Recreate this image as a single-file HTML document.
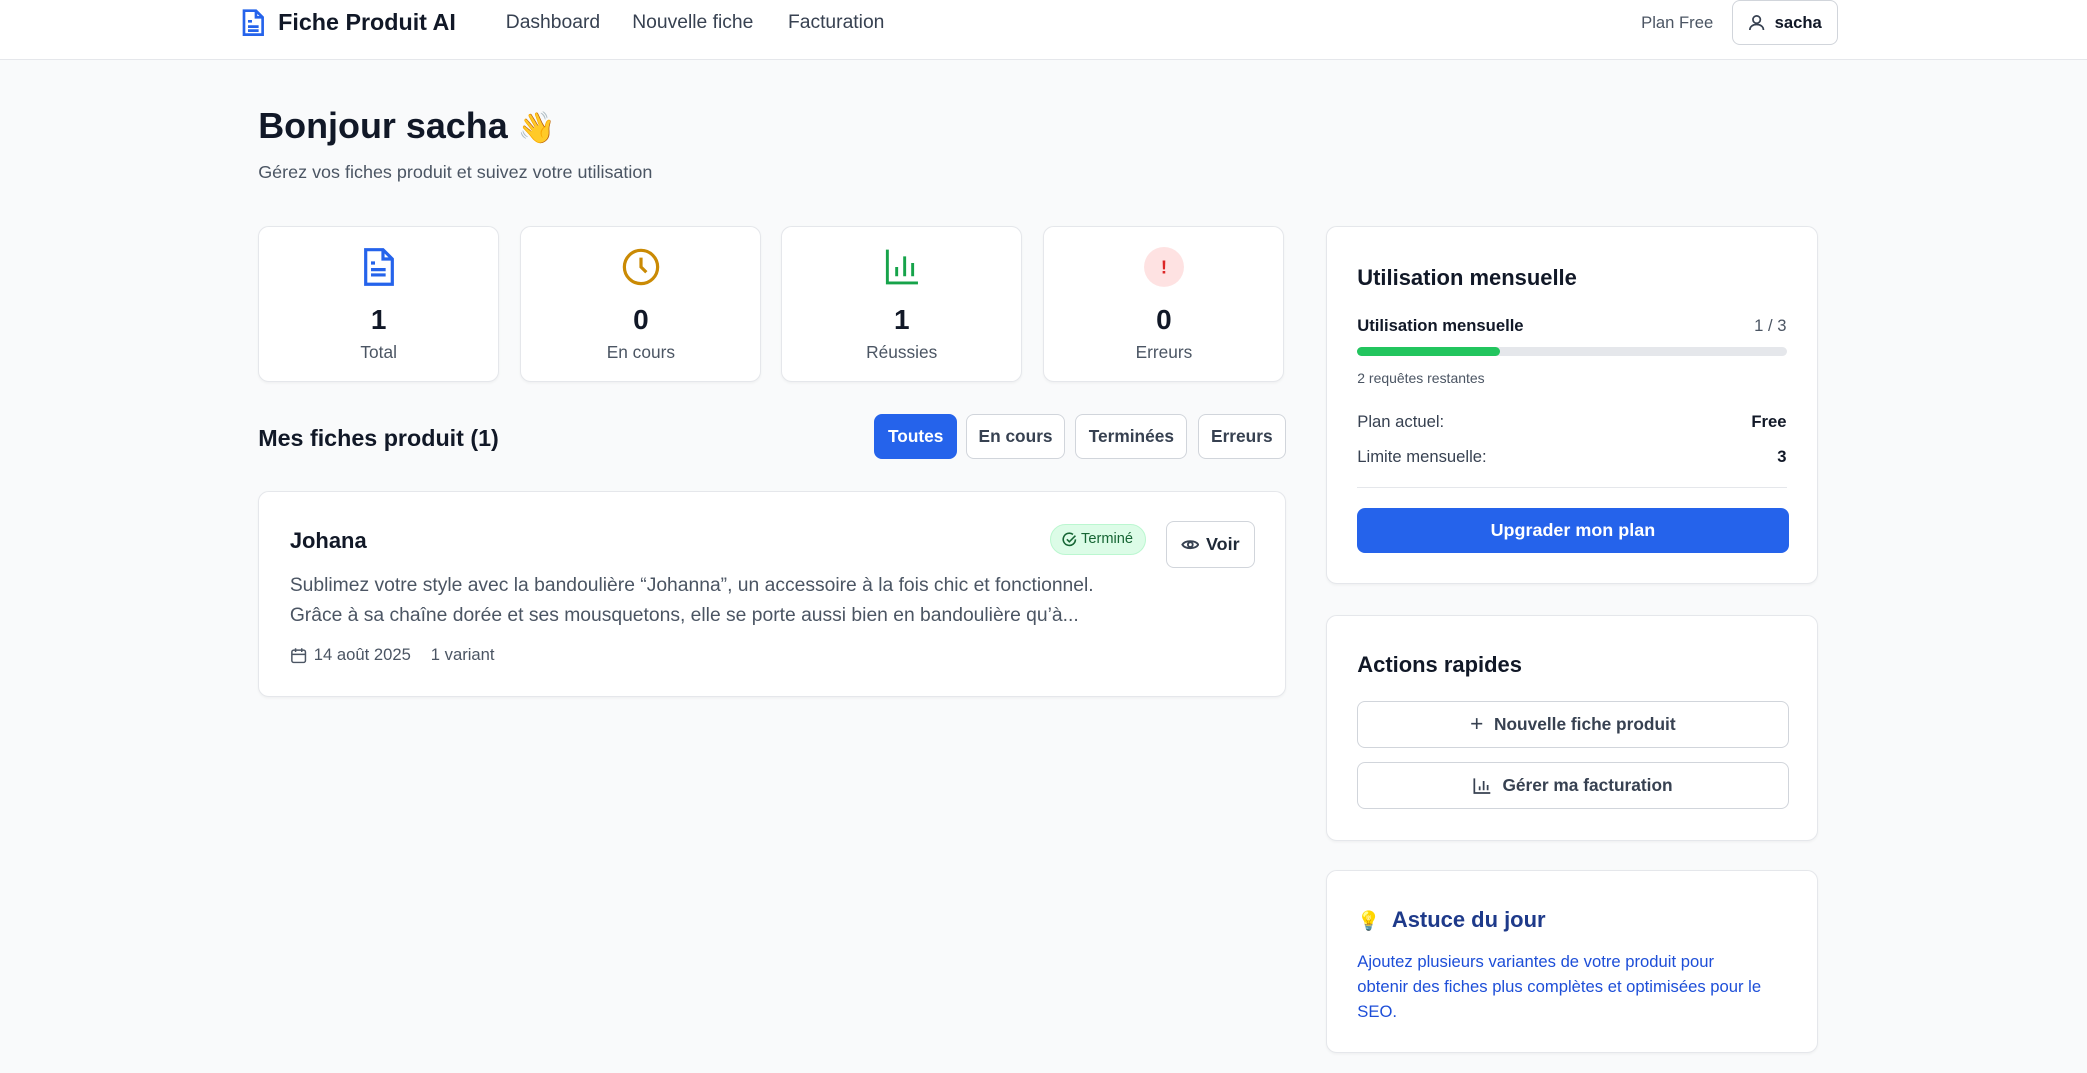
<!DOCTYPE html>
<html><head><meta charset="utf-8"><style>
html{zoom:1.33099}
*{box-sizing:border-box;margin:0;padding:0}
body{width:1568px;height:806px;overflow:hidden;background:#f9fafb;font-family:"Liberation Sans","Noto Sans CJK JP",sans-serif;color:#111827;position:relative}
.a{position:absolute}
.nav{left:0;top:0;width:1568px;height:45px;background:#fff;border-bottom:1px solid #e5e7eb}
.card{position:absolute;background:#fff;border:1px solid #e5e7eb;border-radius:8px;box-shadow:0 1px 2px rgba(0,0,0,.04)}
.stat{top:170px;height:117px;width:181px;text-align:center}
.stat svg{position:absolute;left:50%;top:15px;transform:translateX(-50%)}
.stat .n{position:absolute;top:58px;width:100%;font-size:21px;font-weight:bold}
.stat .l{position:absolute;top:86px;width:100%;font-size:13px;color:#4b5563}
.fb{position:absolute;top:311px;height:34px;border:1px solid #d1d5db;border-radius:6px;background:#fff;font-size:13px;font-weight:600;color:#374151;display:flex;align-items:center;justify-content:center}
.t{font-size:16.5px;font-weight:bold}
.ob{position:absolute;left:23px;width:324px;height:35px;border:1px solid #d1d5db;border-radius:6px;font-size:13px;font-weight:bold;color:#374151;display:flex;align-items:center;justify-content:center;gap:8px}
</style></head><body>
<div class="a nav"></div>
<svg class="a" style="left:180px;top:6px" width="20" height="22" viewBox="0 0 20 22" fill="none" stroke="#2563eb" stroke-width="2"><path d="M3 2h9l5 5v13H3z"/><path d="M12 2v5h5M6 10h3M6 14h8M6 17h8"/></svg>
<div class="a" style="left:209px;top:7px;font-size:17.5px;font-weight:bold">Fiche Produit AI</div>
<div class="a" style="left:380px;top:9px;font-size:14.5px;color:#374151">Dashboard</div>
<div class="a" style="left:475px;top:9px;font-size:14.5px;color:#374151">Nouvelle fiche</div>
<div class="a" style="left:592px;top:9px;font-size:14.5px;color:#374151">Facturation</div>
<div class="a" style="left:1233px;top:10px;font-size:12.5px;color:#4b5563">Plan Free</div>
<div class="a" style="left:1301px;top:0;width:80px;height:34px;border:1px solid #d1d5db;border-radius:6px;font-size:12.5px;font-weight:bold;display:flex;align-items:center;justify-content:center;gap:7px"><svg width="13" height="13" viewBox="0 0 14 14" fill="none" stroke="#374151" stroke-width="1.4"><circle cx="7" cy="4.5" r="3"/><path d="M1.5 13c0-3 2.5-4.5 5.5-4.5s5.5 1.5 5.5 4.5"/></svg>sacha</div>

<div class="a" style="left:194px;top:79px;font-size:27px;font-weight:bold">Bonjour sacha <span style="font-size:23px">👋</span></div>
<div class="a" style="left:194px;top:122px;font-size:13.5px;color:#4b5563">Gérez vos fiches produit et suivez votre utilisation</div>

<div class="card stat" style="left:194px"><svg width="26" height="30" viewBox="0 0 26 30" fill="none" stroke="#2563eb" stroke-width="2.4"><path d="M3 2h13l7 7v19H3z"/><path d="M16 2v7h7M7 12h3M7 17h11M7 21h11"/></svg><div class="n">1</div><div class="l">Total</div></div>
<div class="card stat" style="left:391px"><svg width="30" height="30" viewBox="0 0 30 30" fill="none" stroke="#ca8a04" stroke-width="2.4"><circle cx="15" cy="15" r="12.5"/><path d="M15 8v7l4 4"/></svg><div class="n">0</div><div class="l">En cours</div></div>
<div class="card stat" style="left:587px"><svg width="28" height="30" viewBox="0 0 28 30" fill="none" stroke="#16a34a" stroke-width="2.2"><path d="M3 2v25h23M10 22v-7M16 22V7M22 22V12"/></svg><div class="n">1</div><div class="l">Réussies</div></div>
<div class="card stat" style="left:784px"><svg width="30" height="30" viewBox="0 0 30 30"><circle cx="15" cy="15" r="15" fill="#fee2e2"/><text x="15" y="20" text-anchor="middle" font-size="14" font-weight="bold" fill="#dc2626" font-family="Liberation Sans">!</text></svg><div class="n">0</div><div class="l">Erreurs</div></div>

<div class="a" style="left:194px;top:319px;font-size:17.5px;font-weight:bold">Mes fiches produit (1)</div>
<div class="fb" style="left:657px;width:62px;background:#2563eb;border-color:#2563eb;color:#fff">Toutes</div>
<div class="fb" style="left:726px;width:74px">En cours</div>
<div class="fb" style="left:808px;width:84px">Terminées</div>
<div class="fb" style="left:900px;width:66px">Erreurs</div>

<div class="card" style="left:194px;top:369px;width:772px;height:155px">
<div class="a" style="left:23px;top:27px;font-size:16.5px;font-weight:bold">Johana</div>
<div class="a" style="left:594px;top:24px;width:72px;height:23px;background:#dcfce7;border:1px solid #bbf7d0;border-radius:12px;font-size:11px;color:#166534;display:flex;align-items:center;justify-content:center;gap:3px"><svg width="11" height="11" viewBox="0 0 12 12" fill="none" stroke="#166534" stroke-width="1.3"><path d="M11 6a5 5 0 1 1-2-4"/><path d="M4 6l2 2 5-5"/></svg>Terminé</div>
<div class="a" style="left:681px;top:22px;width:67px;height:35px;border:1px solid #d1d5db;border-radius:6px;font-size:13.5px;font-weight:bold;color:#1f2937;display:flex;align-items:center;justify-content:center;gap:5px"><svg width="14" height="10" viewBox="0 0 14 10" fill="none" stroke="#374151" stroke-width="1.4"><path d="M1 5c2-3.5 10-3.5 12 0c-2 3.5-10 3.5-12 0z"/><circle cx="7" cy="5" r="1.8"/></svg>Voir</div>
<div class="a" style="left:23px;top:59px;font-size:14.5px;line-height:23px;color:#4b5563;width:740px;white-space:nowrap">Sublimez votre style avec la bandoulière “Johanna”, un accessoire à la fois chic et fonctionnel.<br>Grâce à sa chaîne dorée et ses mousquetons, elle se porte aussi bien en bandoulière qu’à...</div>
<div class="a" style="left:23px;top:115px;font-size:12.5px;color:#4b5563;display:flex;align-items:center;gap:5px"><svg width="13" height="13" viewBox="0 0 14 14" fill="none" stroke="#4b5563" stroke-width="1.2"><rect x="1.5" y="2.5" width="11" height="10" rx="1.5"/><path d="M1.5 6h11M4.5 1v3M9.5 1v3"/></svg>14 août 2025<span style="margin-left:10px">1 variant</span></div>
</div>

<div class="card" style="left:996px;top:170px;width:370px;height:269px">
<div class="a t" style="left:23px;top:28px">Utilisation mensuelle</div>
<div class="a" style="left:23px;top:67px;font-size:12.5px;font-weight:bold">Utilisation mensuelle</div>
<div class="a" style="right:23px;top:67px;font-size:12.5px;color:#4b5563">1 / 3</div>
<div class="a" style="left:23px;top:90px;width:323px;height:7px;background:#e5e7eb;border-radius:4px"><div style="width:107px;height:7px;background:#22c55e;border-radius:4px"></div></div>
<div class="a" style="left:23px;top:107px;font-size:10.5px;color:#4b5563">2 requêtes restantes</div>
<div class="a" style="left:23px;top:139px;font-size:12.5px;color:#374151">Plan actuel:</div>
<div class="a" style="right:23px;top:139px;font-size:12.5px;font-weight:bold">Free</div>
<div class="a" style="left:23px;top:165px;font-size:12.5px;color:#374151">Limite mensuelle:</div>
<div class="a" style="right:23px;top:165px;font-size:12.5px;font-weight:bold">3</div>
<div class="a" style="left:23px;top:195px;width:323px;height:1px;background:#e5e7eb"></div>
<div class="a" style="left:23px;top:211px;width:324px;height:34px;background:#2563eb;border-radius:6px;color:#fff;font-size:13.5px;font-weight:bold;display:flex;align-items:center;justify-content:center">Upgrader mon plan</div>
</div>

<div class="card" style="left:996px;top:462px;width:370px;height:170px">
<div class="a t" style="left:23px;top:27px">Actions rapides</div>
<div class="ob" style="top:64px"><span style="font-size:17px;font-weight:normal">+</span>Nouvelle fiche produit</div>
<div class="ob" style="top:110px"><svg width="14" height="13" viewBox="0 0 14 13" fill="none" stroke="#374151" stroke-width="1.3"><path d="M1 1v11h12M5 10V7M8 10V3M11 10V6"/></svg>Gérer ma facturation</div>
</div>

<div class="card" style="left:996px;top:654px;width:370px;height:137px">
<div class="a" style="left:23px;top:27px;font-size:16.5px;font-weight:bold;color:#1e3a8a"><span style="font-size:14px">💡</span>&nbsp; Astuce du jour</div>
<div class="a" style="left:23px;top:58px;white-space:nowrap;font-size:12.5px;line-height:19px;color:#1d4ed8">Ajoutez plusieurs variantes de votre produit pour<br>obtenir des fiches plus complètes et optimisées pour le<br>SEO.</div>
</div>
</body></html>
